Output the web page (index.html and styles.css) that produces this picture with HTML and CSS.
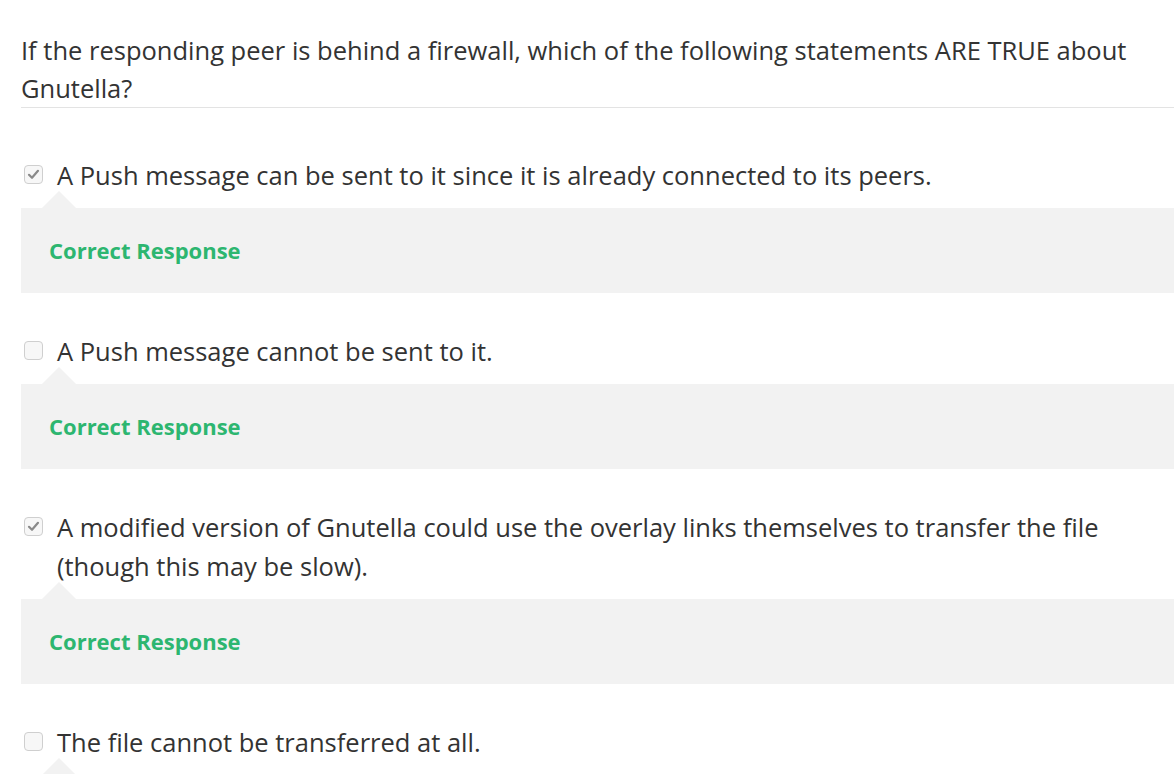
FILE: index.html
```html
<!DOCTYPE html>
<html>
<head>
<meta charset="utf-8">
<link rel="stylesheet" href="styles.css">
</head>
<body>
<div class="quiz">
  <div class="question">If the responding peer is behind a firewall, which of the following statements ARE TRUE about Gnutella?</div>
  <div class="options">
    <div class="option">
      <label class="choice">
        <span class="box checked"><svg viewBox="0 0 19 19" width="19" height="19"><path d="M5 9.8 L8 12.8 L14 5.8" fill="none" stroke="#8a8a8a" stroke-width="2.2" stroke-linecap="round" stroke-linejoin="round"/></svg></span>
        <span class="text">A Push message can be sent to it since it is already connected to its peers.</span>
      </label>
      <div class="feedback">Correct Response</div>
    </div>
    <div class="option">
      <label class="choice">
        <span class="box"></span>
        <span class="text">A Push message cannot be sent to it.</span>
      </label>
      <div class="feedback">Correct Response</div>
    </div>
    <div class="option">
      <label class="choice">
        <span class="box checked"><svg viewBox="0 0 19 19" width="19" height="19"><path d="M5 9.8 L8 12.8 L14 5.8" fill="none" stroke="#8a8a8a" stroke-width="2.2" stroke-linecap="round" stroke-linejoin="round"/></svg></span>
        <span class="text">A modified version of Gnutella could use the overlay links themselves to transfer the file (though this may be slow).</span>
      </label>
      <div class="feedback">Correct Response</div>
    </div>
    <div class="option">
      <label class="choice">
        <span class="box"></span>
        <span class="text">The file cannot be transferred at all.</span>
      </label>
      <div class="feedback">Correct Response</div>
    </div>
  </div>
</div>
</body>
</html>
```

FILE: styles.css
```css
html, body {
  margin: 0;
  padding: 0;
  background: #ffffff;
  overflow: hidden;
}
body {
  font-family: "Open Sans", "Liberation Sans", sans-serif;
  color: #333333;
}
.quiz {
  padding: 31px 0 0 21px;
}
.question {
  font-size: 25.5px;
  line-height: 38px;
  border-bottom: 1px solid #e3e3e3;
  padding-right: 30px;
}
.options {
  padding-top: 48px;
}
.option {
  margin-bottom: 39px;
}
.choice {
  display: flex;
  align-items: flex-start;
  font-size: 25.5px;
  line-height: 39px;
  padding-right: 40px;
}
.box {
  flex: none;
  box-sizing: border-box;
  width: 19px;
  height: 19px;
  margin: 9px 14px 0 3px;
  border: 1px solid #cfcfcf;
  border-radius: 4px;
  background: #f7f7f7;
  display: flex;
  align-items: center;
  justify-content: center;
}
.box svg {
  display: block;
  flex: none;
}
.feedback {
  position: relative;
  margin-top: 13px;
  background: #f2f2f2;
  padding: 30px 28px;
  font-size: 22px;
  line-height: 25px;
  font-weight: 700;
  color: #2db670;
}
.feedback::before {
  content: "";
  position: absolute;
  left: 21px;
  top: -17px;
  border-left: 17px solid transparent;
  border-right: 17px solid transparent;
  border-bottom: 17px solid #f2f2f2;
}
```
